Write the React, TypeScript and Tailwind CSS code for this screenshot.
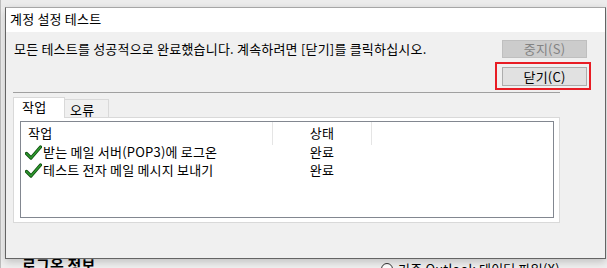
function CheckIcon() {
  return (
    <svg width="17" height="15" viewBox="0 0 17 15" className="shrink-0">
      <path d="M1.5 8.5 L6 13 L15.5 2" fill="none" stroke="#0d4d0d" strokeWidth="3.2" strokeLinecap="round" strokeLinejoin="round" />
      <path d="M1.5 8.5 L6 13 L15.5 2" fill="none" stroke="#2f9a2f" strokeWidth="1.6" strokeLinecap="round" strokeLinejoin="round" />
    </svg>
  );
}

const tasks = [
  { name: "받는 메일 서버(POP3)에 로그온", status: "완료" },
  { name: "테스트 전자 메일 메시지 보내기", status: "완료" },
];

function TaskList() {
  return (
    <div className="w-[534px] h-[97px] border border-[#828790] bg-white">
      {/* header */}
      <div className="flex h-[21px]">
        <div className="w-[251px] pl-[7px] flex items-center">작업</div>
        <div className="w-px h-[23px] bg-[#e5e5e5]" />
        <div className="w-[98px] flex items-center justify-center">상태</div>
        <div className="w-px h-[23px] bg-[#e5e5e5]" />
      </div>
      {tasks.map((t) => (
        <div key={t.name} className="flex h-[18px] items-center">
          <div className="w-[252px] pl-[4px] flex items-center">
            <CheckIcon />
            <span className="ml-px">{t.name}</span>
          </div>
          <div className="w-[98px] text-center">{t.status}</div>
        </div>
      ))}
    </div>
  );
}

function Dialog() {
  return (
    <div className="relative z-10 w-[601px] h-[252px] shrink-0 border border-[#646464] border-t-[#a6a6a6] bg-[#f0f0f0] flex flex-col shadow-[0_3px_8px_rgba(0,0,0,0.2)]">
      <div className="h-[24px] bg-white pl-[4px] pt-[3px]">계정 설정 테스트</div>

      <div className="flex justify-between">
        <div className="pl-[8px] pt-[9px] whitespace-nowrap">
          모든 테스트를 성공적으로 완료했습니다. 계속하려면 [닫기]를 클릭하십시오.
        </div>
        <div className="flex flex-col items-end mr-[14px] pt-[8px]">
          <button
            disabled
            className="mr-[4px] w-[85px] h-[18px] border border-[#bfbfbf] bg-[#cccccc] text-[#838383] flex items-center justify-center"
          >
            중지(S)
          </button>
          <div className="mt-[4px] w-[96px] h-[28px] border-2 border-[#e81c24] pl-[5px] pt-[3px]">
            <button className="w-[85px] h-[19px] border border-[#adadad] bg-[#e1e1e1] flex items-center justify-center">
              닫기(C)
            </button>
          </div>
        </div>
      </div>

      <div className="mt-[2px] ml-[7px] w-[547px] h-px bg-[#a0a0a0]" />

      {/* tabs */}
      <div className="mt-[4px] ml-[7px] flex items-end h-[20px]">
        <div className="relative z-10 self-start w-[52px] h-[21px] border-t border-l border-r border-[#d9d9d9] bg-white pl-[8px] pt-[1px]">
          작업
        </div>
        <div className="w-[44px] h-[18px] border-t border-r border-[#d9d9d9] bg-[#f0f0f0] pl-[5px] pt-[2px]">
          오류
        </div>
      </div>
      <div className="ml-[7px] w-[547px] h-[106px] border border-[#d9d9d9] bg-white pt-[3px] pl-[6px]">
        <TaskList />
      </div>
    </div>
  );
}

export default function App() {
  return (
    <div className="w-[607px] h-[268px] overflow-hidden bg-[#f0f0f0] flex flex-col font-['Noto_Sans_CJK_KR','Noto_Sans',sans-serif] text-[13px] tracking-[0.2px] leading-[16px] text-black">
      <div className="h-[7px] shrink-0 bg-[#ececec] border-l border-[#bdbdbd]" />
      <div className="flex shrink-0">
        <div className="w-[5px] border-l border-[#bdbdbd]" />
        <Dialog />
      </div>
      {/* page behind the dialog */}
      <div className="h-[9px] overflow-hidden flex items-start border-l border-[#bdbdbd]">
        <div className="w-[380px] shrink-0 pl-[21px]">
          <div className="-mt-[3px] font-bold text-[15px] leading-[18px]">로그온 정보</div>
        </div>
        <div className="flex items-start mt-[4px]">
          <div className="w-[12px] h-[12px] rounded-full border border-[#333333] bg-white" />
          <span className="ml-[5px] -mt-[2px]">기존 Outlook 데이터 파일(X)</span>
        </div>
      </div>
    </div>
  );
}
